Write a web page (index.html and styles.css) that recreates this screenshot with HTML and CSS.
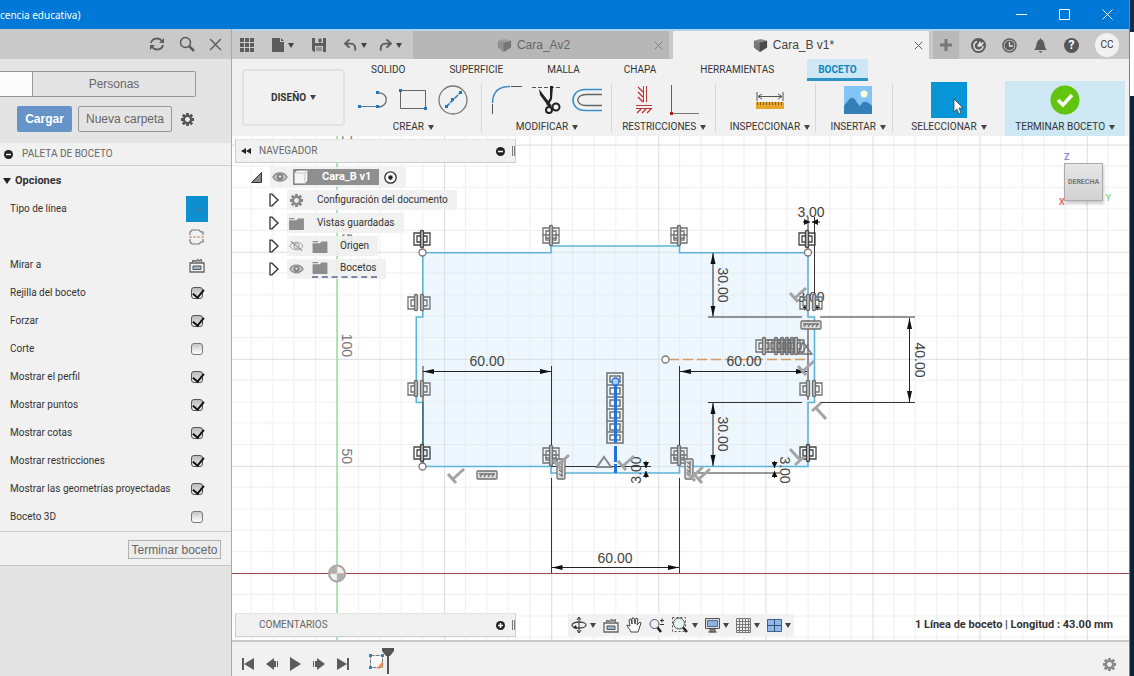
FILE: index.html
```html
<!DOCTYPE html>
<html lang="es">
<head>
    <meta charset="UTF-8">
    <meta name="viewport" content="width=device-width, initial-scale=1.0">
    <title>Cara_B v1*</title>
    <link rel="stylesheet" href="styles.css">
</head>
<body>

    <!-- shared icons -->
    <svg class="sprite" aria-hidden="true">
        <symbol id="i-gear" viewBox="0 0 16 16">
            <path d="M8 1v14M1 8h14M3 3l10 10M13 3L3 13" stroke="currentColor" stroke-width="3"/>
            <circle cx="8" cy="8" r="5" fill="currentColor"/>
            <circle cx="8" cy="8" r="2.6" fill="#eee"/>
        </symbol>
        <symbol id="i-eye" viewBox="0 0 16 12">
            <path d="M1 6C4 0.6 12 0.6 15 6C12 11.4 4 11.4 1 6Z" fill="#c4c4c4" stroke="#8a8a8a" stroke-width="1.4"/>
            <circle cx="8" cy="6" r="3.2" fill="#808080"/>
            <circle cx="8" cy="5.6" r="1.2" fill="#eee"/>
        </symbol>
        <symbol id="i-eye-off" viewBox="0 0 16 12">
            <path d="M1 6C4 0.6 12 0.6 15 6C12 11.4 4 11.4 1 6Z" fill="none" stroke="#9a9a9a"/>
            <circle cx="8" cy="6" r="2.8" fill="none" stroke="#9a9a9a"/>
            <path d="M2 1l12 10" stroke="#888" stroke-width="1.2"/>
        </symbol>
        <symbol id="i-folder" viewBox="0 0 16 14">
            <path d="M0 1h6v1.500H0zM0 3.500h8L9.500 1.500H16V14H0z" fill="#8d8d8d"/>
        </symbol>
        <symbol id="i-arrow" viewBox="0 0 10 14">
            <path d="M1 1.200h2L9 7L3 12.800H1z" fill="#fff" stroke="#333" stroke-width="1.300"/>
        </symbol>
        <symbol id="i-part" viewBox="0 0 16 16">
            <path d="M1 3L8 1L15 3V10L8 15L1 10z" fill="#8b8b8b"/>
            <path d="M1 3L7 5V15L1 10z" fill="#777"/>
            <path d="M7 5L15 3V10L7 15z" fill="#4c4c4c"/>
        </symbol>
        <symbol id="i-close" viewBox="0 0 12 12">
            <path d="M1 1l10 10M11 1L1 11" stroke="currentColor" stroke-width="1.300"/>
        </symbol>
        <symbol id="i-lookat" viewBox="0 0 16 16">
            <path d="M1 6h14v9H1z" fill="#f4f4f4" stroke="#666" stroke-width="1.300"/>
            <path d="M4 9h8v3.500H4z" fill="#9db6cc" stroke="#555"/>
            <path d="M3 6L4 3l2 1.500L9 2v1.500h2L12 2l1 4M3 4h9" fill="none" stroke="#666"/>
        </symbol>
        <symbol id="i-undo" viewBox="0 0 14 14">
            <path d="M6 1L1 5.500L6 10M1.500 5.500H7C11 5.500 12.500 8 12 13" fill="none" stroke="currentColor" stroke-width="2"/>
        </symbol>
    </svg>

    <div class="desktop">
        <div class="window">

            <header class="titlebar">
                <span class="title">cencia educativa)</span>
                <button aria-label="Minimizar"><svg width="11" height="11"><path d="M0 5.500h11" stroke="#fff"/></svg></button>
                <button aria-label="Maximizar"><svg width="11" height="11"><path d="M0.500 0.500h10v10H0.500z" stroke="#fff" fill="none"/></svg></button>
                <button aria-label="Cerrar"><svg width="11" height="11"><path d="M0.500 0.500l10 10M10.500 0.500l-10 10" stroke="#fff"/></svg></button>
            </header>

            <div class="app">

                <!-- left panel -->
                <aside class="side">
                    <div class="side-bar">
                        <button class="icon" aria-label="Actualizar"><svg width="16" height="16" viewBox="0 0 16 16"><path d="M2 7C3 2 10 1 13 5M14 9C13 14 6 15 3 11" fill="none" stroke="currentColor" stroke-width="1.800"/><path d="M15 2v5h-5zM1 14V9h5z" fill="currentColor"/></svg></button>
                        <button class="icon" aria-label="Buscar"><svg width="16" height="16" viewBox="0 0 16 16"><circle cx="6.500" cy="6.500" r="5" fill="none" stroke="currentColor" stroke-width="1.500"/><path d="M10 10l5 5" stroke="currentColor" stroke-width="2.500"/></svg></button>
                        <button class="icon" aria-label="Cerrar panel"><svg width="13" height="13"><use href="#i-close"/></svg></button>
                    </div>

                    <div class="segment">
                        <button class="on" aria-label="Todo"></button>
                        <button class="people">Personas</button>
                    </div>
                    <div class="upload">
                        <button class="load">Cargar</button>
                        <button class="new">Nueva carpeta</button>
                        <button class="icon" aria-label="Ajustes"><svg width="15" height="15"><use href="#i-gear"/></svg></button>
                    </div>

                    <section class="palette">
                        <h2><svg width="9" height="9"><circle cx="4.500" cy="4.500" r="4.500" fill="#222"/><path d="M2 4.500h5" stroke="#fff" stroke-width="1.500"/></svg>PALETA DE BOCETO</h2>
                        <h3><svg width="8" height="6"><path d="M0 0h8L4 6z" fill="#222"/></svg>Opciones</h3>
                        <div class="opt"><span>Tipo de línea</span>
                            <button class="line-type" aria-label="Construcción"><svg width="16" height="14" viewBox="0 0 16 14"><path d="M0 7h16M7 3l5 4-5 4" fill="none" stroke="#3f7f9a" stroke-dasharray="3 1"/></svg></button>
                        </div>
                        <div class="opt"><span></span>
                            <button class="icon" aria-label="Línea de centro"><svg width="16" height="16" viewBox="0 0 16 16"><path d="M1 6V3L3 1H10L12 3H14V6M1 10V13L3 15H10L12 13H14V10" fill="none" stroke="#777" stroke-width="1.200"/><path d="M0 8h16" stroke="#e08040" stroke-dasharray="3 1"/></svg></button>
                        </div>
                        <div class="opt"><span>Mirar a</span>
                            <button class="icon" aria-label="Mirar a"><svg width="16" height="16"><use href="#i-lookat"/></svg></button>
                        </div>
                        <div class="opt"><label for="o1">Rejilla del boceto</label><input type="checkbox" id="o1" checked></div>
                        <div class="opt"><label for="o2">Forzar</label><input type="checkbox" id="o2" checked></div>
                        <div class="opt"><label for="o3">Corte</label><input type="checkbox" id="o3"></div>
                        <div class="opt"><label for="o4">Mostrar el perfil</label><input type="checkbox" id="o4" checked></div>
                        <div class="opt"><label for="o5">Mostrar puntos</label><input type="checkbox" id="o5" checked></div>
                        <div class="opt"><label for="o6">Mostrar cotas</label><input type="checkbox" id="o6" checked></div>
                        <div class="opt"><label for="o7">Mostrar restricciones</label><input type="checkbox" id="o7" checked></div>
                        <div class="opt"><label for="o8">Mostrar las geometrías proyectadas</label><input type="checkbox" id="o8" checked></div>
                        <div class="opt"><label for="o9">Boceto 3D</label><input type="checkbox" id="o9"></div>
                        <div class="palette-foot"><button>Terminar boceto</button></div>
                    </section>
                </aside>

                <main class="main">

                    <!-- quick access + document tabs -->
                    <div class="tabbar">
                        <div class="quick">
                            <button class="icon" aria-label="Panel de datos"><svg width="14" height="14"><path d="M0 2h14M0 7h14M0 12h14" stroke="currentColor" stroke-width="4" stroke-dasharray="4 1"/></svg></button>
                            <button class="icon drop" aria-label="Archivo"><svg width="12" height="14"><path d="M0 0h8v4h4v10H0zM9 0l3 3H9z" fill="currentColor"/></svg></button>
                            <button class="icon" aria-label="Guardar"><svg width="14" height="14"><path d="M0 0h14v14H2l-2-2z" fill="currentColor"/><path d="M3 0h8v5H3zM3 8h8v6H3z" fill="#c9c9c9"/><path d="M7 1h2v3H7zM4 10h6M4 12h6" fill="currentColor" stroke="currentColor"/></svg></button>
                            <button class="icon drop" aria-label="Deshacer"><svg width="13" height="14"><use href="#i-undo"/></svg></button>
                            <button class="icon drop" aria-label="Rehacer"><svg class="flip" width="13" height="14"><use href="#i-undo"/></svg></button>
                        </div>
                        <div class="doc">
                            <a href="#"><svg width="15" height="15"><use href="#i-part"/></svg>Cara_Av2</a>
                            <button class="icon" aria-label="Cerrar Cara_A"><svg width="9" height="9"><use href="#i-close"/></svg></button>
                        </div>
                        <div class="doc active">
                            <a href="#"><svg width="15" height="15"><use href="#i-part"/></svg>Cara_B v1*</a>
                            <button class="icon" aria-label="Cerrar Cara_B"><svg width="9" height="9"><use href="#i-close"/></svg></button>
                        </div>
                        <button class="plus" aria-label="Nuevo"><svg width="12" height="12"><path d="M6 0v12M0 6h12" stroke="#777" stroke-width="3"/></svg></button>
                        <div class="account">
                            <button class="icon" aria-label="Extensiones"><svg width="15" height="15"><circle cx="7.500" cy="7.500" r="7.500" fill="currentColor"/><path d="M6 3.500A4.500 4.500 0 1 0 12 8" fill="none" stroke="#ddd" stroke-width="1.500"/><path d="M6 8l3-5 1 2 3-1-2 4-3 1z" fill="#ddd"/></svg></button>
                            <button class="icon" aria-label="Trabajos"><svg width="15" height="15"><circle cx="7.500" cy="7.500" r="6.500" fill="#ddd" stroke="currentColor" stroke-width="1.500"/><circle cx="7.500" cy="7.500" r="5" fill="currentColor"/><path d="M7.500 4v4h3.500" fill="none" stroke="#ddd" stroke-width="1.300"/></svg></button>
                            <button class="icon" aria-label="Notificaciones"><svg width="15" height="15"><path d="M7.500 0l1 1.500C12 3 11 8 13 11l1 1H1l1-1C4 8 3 3 6.500 1.500zM5.500 13h4l-2 2z" fill="currentColor"/></svg></button>
                            <button class="help">?</button>
                            <button class="avatar">CC</button>
                        </div>
                    </div>

                    <!-- ribbon -->
                    <div class="ribbon">
                        <button class="workspace drop">DISEÑO</button>
                        <div class="ribbon-body">
                            <nav class="ribbon-tabs">
                                <a href="#">SOLIDO</a>
                                <a href="#">SUPERFICIE</a>
                                <a href="#">MALLA</a>
                                <a href="#">CHAPA</a>
                                <a href="#">HERRAMIENTAS</a>
                                <a href="#" class="active">BOCETO</a>
                            </nav>
                            <div class="groups">
                                <div class="group">
                                    <div class="tools">
                                        <svg width="30" height="30"><path d="M20 22C31 22 31 7 20 8" fill="none" stroke="#6f6f6f" stroke-width="1.300"/><path d="M1 21.500h19" stroke="#557f9f"/><path d="M0 20h3v3H0zM18 20h3v3h-3zM18 6h3v3h-3z" fill="#1f78b8"/></svg>
                                        <svg width="30" height="30"><path d="M2.500 5.500h25v18h-25z" fill="none" stroke="#666"/><path d="M1 4h3v3H1zM26 22h3v3h-3z" fill="#1f78b8"/></svg>
                                        <svg width="30" height="30"><circle cx="15" cy="15" r="14" fill="none" stroke="#777" stroke-width="1.300"/><path d="M8 22L22 8" stroke="#1f78b8" stroke-width="1.500" stroke-dasharray="5 1"/><path d="M7 20h3v3H7zM13 13h3v3h-3zM21 6h3v3h-3z" fill="#1f78b8"/></svg>
                                    </div>
                                    <button class="drop">CREAR</button>
                                </div>
                                <div class="group">
                                    <div class="tools">
                                        <svg width="31" height="30"><path d="M1.500 29V19M20 1.500H31" stroke="#555"/><path d="M1.500 18C1.500 7 8 1.500 19 1.500" fill="none" stroke="#3a8fcb" stroke-width="1.500"/></svg>
                                        <svg width="30" height="30"><path d="M0 2.500h30" stroke="#555" stroke-dasharray="4 2"/><path d="M7 4L20 21L17 22L8 10zM18 1h3l-1 13-4 7-2-2 4-6z" fill="#222"/><circle cx="17" cy="25" r="3" fill="none" stroke="#222" stroke-width="2"/><circle cx="24" cy="22" r="3.500" fill="none" stroke="#222" stroke-width="2"/></svg>
                                        <svg width="30" height="30"><path d="M30 4.500H13C-3 4.500-3 25.500 13 25.500H30" fill="none" stroke="#3a8fcb" stroke-width="1.600"/><path d="M30 9.500H14C3 9.500 3 20.500 14 20.500H30" fill="none" stroke="#666" stroke-width="1.400"/></svg>
                                    </div>
                                    <button class="drop">MODIFICAR</button>
                                </div>
                                <div class="group">
                                    <div class="tools">
                                        <svg width="30" height="30"><path d="M14.500 1v16M17.500 1v16M7 20.500h16M7 23.500h16" stroke="#b73a3a" fill="none"/><path d="M14 7L9 2M14 12L9 7M14 17L9 12M8 28l4-4M13 28l4-4M18 28l4-4" stroke="#c22" stroke-width="1.200"/></svg>
                                        <svg width="30" height="30"><path d="M2.500 0v28" stroke="#c03a3a"/><path d="M2 28.500h28" stroke="#777"/><path d="M1 27h3v3H1z" fill="#a22"/></svg>
                                    </div>
                                    <button class="drop">RESTRICCIONES</button>
                                </div>
                                <div class="group shift">
                                    <div class="tools">
                                        <svg width="28" height="30"><path d="M1 7v9M27 7v9M2 11.500h24M6 9l-4 2.500L6 14M22 9l4 2.500L22 14" stroke="#555" fill="none"/><path d="M0 17h28v7H0z" fill="#e8a62b"/><path d="M1 18.500h26" stroke="#7b5a1a" stroke-width="3" stroke-dasharray="1 2"/></svg>
                                    </div>
                                    <button class="drop">INSPECCIONAR</button>
                                </div>
                                <div class="group shift">
                                    <div class="tools">
                                        <svg width="28" height="28"><path d="M0 0h28v28H0z" fill="#82c4f5"/><path d="M0 20C4 15 6 11 9 12C12 13 13 18 16 20C19 15 22 14 28 20V28H0z" fill="#357fb8"/><circle cx="20" cy="8" r="3.500" fill="#fffce0"/></svg>
                                    </div>
                                    <button class="drop">INSERTAR</button>
                                </div>
                                <div class="group">
                                    <div class="tools">
                                        <svg width="36" height="36"><path d="M0 0h36v36H0z" fill="#0696d7"/><path d="M23 17V30L26 27L28 32L30 31L28 26H32z" fill="#fff" stroke="#333" stroke-width="0.700"/></svg>
                                    </div>
                                    <button class="drop">SELECCIONAR</button>
                                </div>
                                <div class="group finish">
                                    <div class="tools">
                                        <svg width="30" height="30"><circle cx="15" cy="15" r="14.500" fill="#62c40c"/><path d="M8 15l5 5L22 10" fill="none" stroke="#fff" stroke-width="3.500"/></svg>
                                    </div>
                                    <button class="drop">TERMINAR BOCETO</button>
                                </div>
                            </div>
                        </div>
                    </div>

                    <!-- sketch canvas -->
                    <div class="canvas">
                        <svg class="sketch" aria-label="Boceto">
                            <defs>
                                <pattern id="grid" x="337" y="573" width="107.100" height="107.100" patternUnits="userSpaceOnUse">
                                    <path d="M21.400 0v108M42.800 0v108M64.300 0v108M85.700 0v108M0 21.400h108M0 42.800h108M0 64.300h108M0 85.700h108" stroke="#888" stroke-opacity="0.140"/>
                                    <path d="M0.500 0v108M0 0.500h108" stroke="#777" stroke-opacity="0.260"/>
                                </pattern>
                                <marker id="tip" viewBox="0 0 11 6" refX="11" refY="3" markerWidth="11" markerHeight="6" markerUnits="userSpaceOnUse" orient="auto-start-reverse"><path d="M0 0.500L11 3L0 5.500z" fill="#111"/></marker>
                                <marker id="tip-s" viewBox="0 0 6 6" refX="6" refY="3" markerWidth="6" markerHeight="6" markerUnits="userSpaceOnUse" orient="auto"><path d="M0 0L6 3L0 6z" fill="#111"/></marker>
                                <g id="coin" fill="none">
                                    <path d="M-2-6H-8V6H-2M2-6H8V6H2M-2-3H-5V3H-2M2-3H5V3H2"/>
                                    <rect x="-1.500" y="-8.500" width="3" height="17" rx="1" fill="#bbb"/>
                                </g>
                                <g id="coin2" fill="none">
                                    <path d="M-2-8H-8V7H-2M2-8H8V7H2M-2-5H-5V4H-2M2-5H5V4H2M-8-1H8M-6 2H6"/>
                                    <rect x="-1.500" y="-10.500" width="3" height="20" rx="1" fill="#bbb"/>
                                </g>
                                <g id="coinw" fill="none">
                                    <path d="M-5-6H-11V6H-5M2-6H11V6H2M-5-3H-8V3H-5M2-3H8V3H2M-2-5V6"/>
                                    <rect x="-4.500" y="-8.500" width="3" height="16" rx="1" fill="#bbb"/>
                                    <rect x="1.500" y="-8.500" width="3" height="16" rx="1" fill="#bbb"/>
                                </g>
                                <g id="perp"><path d="M-4 3L7-7M-9-2L-1 7" fill="none" stroke="#a4a4a4" stroke-width="3"/></g>
                                <g id="horiz"><rect x="-10" y="-4" width="20" height="8" rx="1" fill="#ddd"/><path d="M-8-1H8M-7 2l2-3M-3 2l2-3M1 2l2-3M5 2l2-3"/></g>
                            </defs>
                            <g transform="translate(-232 -136)">
                                <rect x="232" y="136" width="100%" height="100%" fill="url(#grid)"/>
                                <path class="profile" d="M422.800 252.700H551V246H679.500V252.700H808V317H814.500V402.500H808V466.500H679.500V473H551V466.500H422.800V402.500H416.300V317H422.800Z"/>
                                <path d="M232 573.500H2000" stroke="#a04848"/>
                                <path d="M337 136V2000" stroke="#9bdca4" stroke-width="1.500"/>
                                <circle cx="337" cy="573.500" r="8" fill="#eee" fill-opacity="0.800" stroke="#a9a2a2" stroke-width="2"/>
                                <path d="M337 573.500V566A7.500 7.500 0 0 0 329.500 573.500ZM337 573.500V581A7.500 7.500 0 0 0 344.500 573.500Z" fill="#b5aeae"/>
                                <g class="ruler">
                                    <text transform="translate(342 464) rotate(90)">50</text>
                                    <text transform="translate(342 357) rotate(90)">100</text>
                                    <text transform="translate(342 249) rotate(90)">150</text>
                                    <text transform="translate(342 141) rotate(90)">200</text>
                                </g>

                                <!-- extension lines -->
                                <path class="ext" d="M423 366V466M551.500 366V466M551.500 478V573M679.500 366V466M679.500 478V573M708 317H802M820 317H915M708 402.500H802M820 402.500H915M808 217V250M814.500 217V310M808 320V400M551 466.500H651M694 473H780"/>
                                <!-- dimensions -->
                                <g class="dim">
                                    <path d="M423 371.500H551"/>
                                    <path d="M680 371.500H807"/>
                                    <path d="M551.500 567.500H679"/>
                                    <path d="M713 253V316.500"/>
                                    <path d="M713 403V466"/>
                                    <path d="M909.500 318V402"/>
                                </g>
                                <g class="dim-s">
                                    <path d="M803 222H810"/><path d="M820 222H812"/>
                                    <path d="M803 307.500H810"/><path d="M820 307.500H812"/>
                                    <path d="M646 461V468"/><path d="M646 478V471"/>
                                    <path d="M774.500 461V468"/><path d="M774.500 478V471"/>
                                </g>
                                <path d="M669 359.500H808" stroke="#d99a62" stroke-width="1.300" stroke-dasharray="10 4"/>
                                <g class="values">
                                    <text x="487" y="366">60.00</text>
                                    <text x="744" y="366">60.00</text>
                                    <text x="615" y="563">60.00</text>
                                    <text x="811" y="217">3.00</text>
                                    <text x="811" y="302">3.00</text>
                                    <text transform="translate(718 285) rotate(90)">30.00</text>
                                    <text transform="translate(718 434) rotate(90)">30.00</text>
                                    <text transform="translate(915 360) rotate(90)">40.00</text>
                                    <text transform="translate(780 470) rotate(90)">3.00</text>
                                    <text transform="translate(641 470) rotate(-90)">3.00</text>
                                </g>

                                <!-- constraints -->
                                <g stroke="#444" stroke-width="1.300">
                                    <use href="#coin" x="422" y="239"/><use href="#coin" x="422" y="453"/>
                                    <use href="#coin" x="807" y="239"/><use href="#coin" x="808" y="453"/>
                                </g>
                                <g stroke="#707070" stroke-width="1.300">
                                    <use href="#coin2" x="551" y="236"/><use href="#coin2" x="679" y="236"/>
                                    <use href="#coin2" x="551" y="456"/><use href="#coin2" x="679" y="456"/>
                                    <use href="#coinw" x="419" y="303"/><use href="#coinw" x="419" y="389"/>
                                    <use href="#coinw" x="811" y="303"/><use href="#coinw" x="811" y="389"/>
                                    <use href="#coin" x="764" y="346"/><use href="#coin" x="776" y="346"/><use href="#coin" x="782" y="346"/>
                                    <use href="#coin" x="787" y="346"/><use href="#coin" x="792" y="346"/><use href="#coin" x="796" y="346"/>
                                    <path d="M798 354H812L803 342ZM802 353L808 344" fill="none"/>
                                    <use href="#horiz" x="487" y="475"/><use href="#horiz" x="811" y="325"/>
                                    <use href="#horiz" transform="translate(561 469) rotate(90)"/>
                                    <use href="#horiz" transform="translate(689 469) rotate(90)"/>
                                    <path d="M607 373H623V443H607ZM610 376H620V382H610ZM610 388H620V394H610ZM610 400H620V406H610ZM610 412H620V418H610ZM610 424H620V430H610ZM610 435H620V440H610ZM607 385H623M607 397H623M607 409H623M607 421H623M607 432H623" fill="none" stroke-width="1.500"/>
                                </g>
                                <g>
                                    <use href="#perp" x="457" y="476"/><use href="#perp" x="627" y="463"/>
                                    <use href="#perp" x="799" y="295"/><use href="#perp" x="562" y="462"/>
                                    <use href="#perp" x="703" y="476"/><use href="#perp" x="696" y="474"/>
                                    <use href="#perp" x="807" y="368"/>
                                    <use href="#perp" transform="translate(819 412) rotate(90)"/>
                                    <use href="#perp" transform="translate(797 456) rotate(-90)"/>
                                </g>
                                <path d="M604 457L611 467H597Z" fill="none" stroke="#888" stroke-width="2"/>

                                <path d="M615.500 381V443" stroke="#2673d8" stroke-width="3"/>
                                <path d="M615.500 446V473" stroke="#2673d8" stroke-width="3" stroke-dasharray="16 2"/>
                                <g fill="#fff" stroke="#777" stroke-width="1.300">
                                    <circle cx="422.500" cy="252.500" r="3.500"/><circle cx="808" cy="252.500" r="3.500"/>
                                    <circle cx="422.500" cy="466.500" r="3.500"/><circle cx="665.500" cy="359.500" r="3.500"/>
                                    <circle cx="615.500" cy="381.500" r="3.500" fill="#a8ccf4" stroke="#2673d8"/>
                                </g>
                            </g>
                        </svg>

                        <section class="browser">
                            <h2 class="panel-head">
                                <svg width="10" height="6"><path d="M5 0v6L0 3zM10 0v6L5 3z" fill="#222"/></svg>
                                <span>NAVEGADOR</span>
                                <svg width="9" height="9"><circle cx="4.500" cy="4.500" r="4.500" fill="#222"/><path d="M2 4.500h5" stroke="#fff" stroke-width="1.500"/></svg>
                                <i class="grip"></i>
                            </h2>
                            <ul class="tree">
                                <li class="root">
                                    <svg width="11" height="11"><path d="M10.500 0.500v10H0.500z" fill="#888" stroke="#333"/></svg>
                                    <div class="node">
                                        <svg width="16" height="12"><use href="#i-eye"/></svg>
                                        <b><svg width="16" height="16" viewBox="0 0 16 16"><path d="M1 4L4 1H15V12L12 15H1z" fill="#f5f5f5" stroke="#777"/><path d="M1 4h11v11M12 4l3-3" fill="none" stroke="#c5c5c5"/></svg>Cara_B v1</b>
                                        <svg width="13" height="13"><circle cx="6.500" cy="6.500" r="5.700" fill="#fff" stroke="#333" stroke-width="1.300"/><circle cx="6.500" cy="6.500" r="2.200" fill="#222"/></svg>
                                    </div>
                                </li>
                                <li><svg width="10" height="14"><use href="#i-arrow"/></svg><div class="node wide"><svg class="grey" width="15" height="15"><use href="#i-gear"/></svg>Configuración del documento</div></li>
                                <li><svg width="10" height="14"><use href="#i-arrow"/></svg><div class="node wide"><svg width="15" height="13"><use href="#i-folder"/></svg>Vistas guardadas</div></li>
                                <li><svg width="10" height="14"><use href="#i-arrow"/></svg><div class="node"><svg width="15" height="12"><use href="#i-eye-off"/></svg><svg width="16" height="13"><use href="#i-folder"/></svg><span>Origen</span></div></li>
                                <li><svg width="10" height="14"><use href="#i-arrow"/></svg><div class="node"><svg width="15" height="12"><use href="#i-eye"/></svg><div class="hatched"><svg width="16" height="13"><use href="#i-folder"/></svg><span>Bocetos</span></div></div></li>
                            </ul>
                        </section>

                        <div class="viewcube">
                            <span class="z">Z</span>
                            <button>DERECHA</button>
                            <span class="x">X</span>
                            <span class="y">Y</span>
                        </div>

                        <section class="comments panel-head">
                            <span>COMENTARIOS</span>
                            <svg width="9" height="9"><circle cx="4.500" cy="4.500" r="4.500" fill="#222"/><path d="M2 4.500h5M4.500 2v5" stroke="#fff" stroke-width="1.500"/></svg>
                            <i class="grip"></i>
                        </section>

                        <div class="viewbar">
                            <button class="icon drop" aria-label="Órbita"><svg width="16" height="16"><path d="M8 0v16M6 3l2-3 2 3M6 13l2 3 2-3" stroke="#333" fill="none"/><ellipse cx="8" cy="8" rx="7" ry="3" fill="none" stroke="#444" stroke-width="1.300"/><path d="M5 8l-3 3 4 1z" fill="#222"/></svg></button>
                            <button class="icon" aria-label="Mirar a"><svg width="16" height="16"><use href="#i-lookat"/></svg></button>
                            <button class="icon" aria-label="Encuadre"><svg width="16" height="16"><path d="M5 15C4 12 1 10 1 8L4 9L3 3L5 2L6 7V1H8L9 7L10 1L12 2L11 8L14 5L15 6L12 15Z" fill="#fff" stroke="#444"/></svg></button>
                            <button class="icon" aria-label="Zoom"><svg width="16" height="16"><circle cx="5.500" cy="7" r="4.500" fill="#eef" stroke="#555"/><path d="M8.500 10.500L12 15" stroke="#222" stroke-width="2.500"/><path d="M11 3.500h4M13 1.500v4M11 7.500h4" stroke="#333"/></svg></button>
                            <button class="icon drop" aria-label="Ajustar"><svg width="17" height="16"><path d="M0.500 0.500h13v14h-13z" fill="none" stroke="#555" stroke-dasharray="2 2"/><circle cx="7" cy="6.500" r="5.500" fill="#e4f2f2" stroke="#555"/><path d="M11 10.500l4 4.500" stroke="#222" stroke-width="2.500"/></svg></button>
                            <button class="icon drop" aria-label="Visualización"><svg width="15" height="15"><path d="M0.500 0.500h14v10h-14z" fill="#ddd" stroke="#555"/><path d="M2.500 2.500h10v6h-10z" fill="#8db4e0" stroke="#4d6f99"/><path d="M5 11h5v3H5zM3 14h9" fill="#888" stroke="#555"/></svg></button>
                            <button class="icon drop" aria-label="Rejilla"><svg width="15" height="15"><path d="M0.500 0.500h14v14h-14zM3.500 0v15M6.500 0v15M9.500 0v15M12.500 0v15M0 3.500h15M0 6.500h15M0 9.500h15M0 12.500h15" fill="#eee" stroke="#777"/></svg></button>
                            <button class="icon drop" aria-label="Ventanas"><svg width="15" height="13"><path d="M0.500 0.500h14v12h-14z" fill="#8db8ea" stroke="#44628a"/><path d="M7.500 0v13M0 6.500h15" stroke="#33507a"/></svg></button>
                        </div>
                        <p class="status">1 Línea de boceto | Longitud : 43.00 mm</p>
                    </div>

                    <footer class="timeline">
                        <button class="icon" aria-label="Inicio"><svg width="12" height="12"><path d="M0 0h2v12H0zM12 0v12L2 6z" fill="currentColor"/></svg></button>
                        <button class="icon" aria-label="Anterior"><svg width="12" height="12"><path d="M8 0v12L0 6zM8 3h2v6H8zM11 3h1v6h-1z" fill="currentColor"/></svg></button>
                        <button class="icon" aria-label="Reproducir"><svg width="11" height="14"><path d="M0 0l11 7-11 7z" fill="currentColor"/></svg></button>
                        <button class="icon" aria-label="Siguiente"><svg width="12" height="12"><path d="M4 0v12l8-6zM0 3h1v6H0zM2 3h2v6H2z" fill="currentColor"/></svg></button>
                        <button class="icon" aria-label="Final"><svg width="12" height="12"><path d="M10 0h2v12h-2zM0 0v12l10-6z" fill="currentColor"/></svg></button>
                        <button class="icon feature" aria-label="Boceto1"><svg width="26" height="26"><path d="M1.500 7.500h12v12h-12z" fill="#fafafa" stroke="#777" stroke-dasharray="4 1"/><path d="M0 6h3v3H0zM12 6h3v3h-3zM0 18h3v3H0z" fill="#2f88c4"/><path d="M8 20l5-6 2 2-5 5z" fill="#f0904a"/><path d="M13 0h12v3l-4 5h-1v18h-2V8h-1l-4-5z" fill="#555"/></svg></button>
                        <button class="icon settings" aria-label="Configuración"><svg width="15" height="15"><use href="#i-gear"/></svg></button>
                    </footer>
                </main>
            </div>
        </div>
    </div>

</body>
</html>
```
FILE: styles.css
```css
* {
    margin: 0;
    padding: 0;
    box-sizing: border-box;
}

body {
    font-family: Roboto, "Liberation Sans", sans-serif;
    font-size: 10px;
    line-height: 14px;
    color: #333;
    overflow: hidden;
}

button {
    font: inherit;
    color: inherit;
    background: none;
    border: none;
    cursor: pointer;
}

a {
    color: inherit;
    text-decoration: none;
}

svg {
    display: block;
    flex: none;
}

.sprite {
    position: absolute;
    width: 0;
    height: 0;
}

.desktop {
    height: 100vh;
    padding-right: 4px;
    background: linear-gradient(#1b2a44 32px, #fff 32px, #fff 96px, #0c2438 96px);
}

.window {
    height: 100%;
    display: flex;
    flex-direction: column;
    border-right: 1px solid #4a90c8;
}

/* title bar */
.titlebar {
    height: 29px;
    flex: none;
    display: flex;
    align-items: center;
    background: #0078d7;
    color: #fff;
}

.title {
    flex: 1;
    font-family: "Noto Sans", sans-serif;
    font-size: 10px;
}

.titlebar button {
    width: 43px;
    height: 29px;
    display: flex;
    align-items: center;
    justify-content: center;
}

.app {
    flex: 1;
    min-height: 0;
    display: flex;
}

.icon {
    display: flex;
    align-items: center;
    justify-content: center;
    color: #5c5c5c;
}

.drop::after {
    content: "";
    display: inline-block;
    margin-left: 4px;
    vertical-align: middle;
    border: 3px solid transparent;
    border-top: 5px solid #444;
    border-bottom: none;
}

/* left panel */
.side {
    width: 232px;
    flex: none;
    background: #e4e4e4;
    border-right: 1px solid #aaa;
}

.side-bar {
    height: 30px;
    display: flex;
    align-items: center;
    justify-content: flex-end;
    gap: 14px;
    padding-right: 9px;
    background: #c9c9c9;
}

.segment {
    display: flex;
    height: 26px;
    margin: 12px 35px 9px 0;
    border: 1px solid #999;
    border-left: none;
    border-radius: 0 2px 2px 0;
}

.segment .on {
    width: 33px;
    background: #fcfcfc;
    border-right: 1px solid #999;
}

.people {
    flex: 1;
}

.people, .upload button, .palette-foot button {
    font-family: "Liberation Sans", sans-serif;
    font-size: 12px;
    color: #666;
}

.upload {
    display: flex;
    gap: 6px;
    padding: 0 0 11px 17px;
}

.upload .load {
    width: 55px;
    height: 26px;
    border-radius: 2px;
    background: #6794c8;
    color: #fff;
    font-weight: bold;
}

.upload .new {
    width: 94px;
    border: 1px solid #999;
    border-radius: 2px;
}

.upload .icon {
    width: 18px;
    color: #555;
}

.palette {
    background: #f1f1f1;
    border-bottom: 1px solid #c5c5c5;
}

.palette h2, .palette h3 {
    display: flex;
    align-items: center;
    font-weight: normal;
}

.palette h2 {
    height: 23px;
    gap: 9px;
    padding-left: 4px;
    border-bottom: 1px solid #ccc;
    font-size: 10px;
    color: #666;
}

.palette h3 {
    height: 29px;
    gap: 4px;
    padding-left: 3px;
    font-size: 11px;
    font-weight: bold;
}

.opt {
    height: 28px;
    display: flex;
    align-items: center;
    justify-content: space-between;
    padding: 0 23px 0 10px;
}

.opt .icon, .opt .line-type {
    width: 22px;
    height: 26px;
    display: flex;
    align-items: center;
    justify-content: center;
}

.opt .line-type {
    background: #0e8fd0;
}

.opt input {
    appearance: none;
    width: 12px;
    height: 12px;
    margin-right: 5px;
    border: 1px solid #777;
    border-radius: 3px;
    background: linear-gradient(#c8c8c8, #fff);
    position: relative;
}

.opt input:checked {
    background: linear-gradient(#bbb, #e8e8e8);
    border-color: #555;
}

.opt input:checked::after {
    content: "";
    position: absolute;
    left: 3px;
    top: -1px;
    width: 5px;
    height: 9px;
    border: solid #111;
    border-width: 0 2px 2px 0;
    transform: rotate(40deg);
}

.palette-foot {
    display: flex;
    justify-content: flex-end;
    padding: 8px 10px 6px;
    border-top: 1px solid #ccc;
}

.palette-foot button {
    height: 19px;
    width: 93px;
    border: 1px solid #b0b0b0;
    background: #ececec;
}

/* document tabs */
.main {
    flex: 1;
    min-width: 0;
    display: flex;
    flex-direction: column;
    background: #f1f1f1;
}

.tabbar {
    height: 30px;
    display: flex;
    align-items: stretch;
    background: #c9c9c9;
    border-top: 2px solid #b5d3ea;
}

.quick {
    width: 181px;
    display: flex;
    align-items: center;
    gap: 18px;
    padding-left: 8px;
}

.quick .drop + .drop {
    margin-left: -6px;
}

.flip {
    transform: scaleX(-1);
}

.doc {
    flex: 1;
    display: flex;
    align-items: center;
    margin-right: 4px;
    padding-right: 6px;
    background: #b7b7b7;
    color: #666;
}

.doc a {
    flex: 1;
    display: flex;
    justify-content: center;
    align-items: center;
    gap: 5px;
    font-family: "Liberation Sans", sans-serif;
    font-size: 12px;
}

.doc:not(.active) svg {
    opacity: 0.6;
}

.doc.active {
    background: #f1f1f1;
    color: #444;
}

.plus {
    width: 26px;
    display: flex;
    align-items: center;
    justify-content: center;
    background: #b9b9b9;
}

.account {
    display: flex;
    align-items: center;
    gap: 16px;
    padding: 0 10px 0 12px;
}

.help {
    width: 15px;
    height: 15px;
    border-radius: 50%;
    background: #555;
    color: #fff;
    font-size: 12px;
    font-weight: bold;
}

.avatar {
    width: 24px;
    height: 24px;
    border-radius: 50%;
    background: #f1f1f1;
}

/* ribbon */
.ribbon {
    height: 77px;
    display: flex;
    padding-right: 4px;
}

.workspace {
    width: 103px;
    margin: 10px 0 10px 10px;
    border: 2px solid #e2e2e2;
    border-radius: 4px;
    font-weight: bold;
}

.ribbon-body {
    flex: 1;
}

.ribbon-tabs {
    display: flex;
    gap: 22px;
    padding-left: 15px;
}

.ribbon-tabs a {
    height: 22px;
    padding: 4px 11px 0;
}

.ribbon-tabs .active {
    background: #cde8f4;
    border-bottom: 3px solid #2b93c6;
    color: #0f86bf;
    font-weight: bold;
}

.groups {
    height: 55px;
    display: grid;
    grid-template-columns: 137fr 131fr 104fr 100fr 77fr 113fr 120fr;
}

.group {
    display: flex;
    flex-direction: column;
    align-items: center;
    justify-content: flex-end;
    position: relative;
}

.group.shift {
    padding-left: 8px;
}

.group:not(.finish)::after {
    content: "";
    position: absolute;
    right: 0;
    top: 3px;
    bottom: 4px;
    width: 1px;
    background: #d8d8d8;
}

.group:nth-child(6)::after {
    display: none;
}

.group button {
    height: 18px;
    white-space: nowrap;
}

.tools {
    height: 37px;
    display: flex;
    align-items: center;
    gap: 10px;
}

.finish {
    background: #cde8f2;
}

/* canvas */
.canvas {
    flex: 1;
    min-height: 0;
    position: relative;
    background: #fff;
    overflow: hidden;
}

.sketch {
    position: absolute;
    width: 100%;
    height: 100%;
}

.profile {
    fill: #cfe9fb;
    fill-opacity: 0.35;
    stroke: #5eb4d8;
    stroke-width: 1.6;
}

.ruler text {
    font-family: "Liberation Sans", sans-serif;
    font-size: 14px;
    fill: #777;
    text-anchor: end;
}

.ext {
    stroke: #333;
    fill: none;
}

.dim path {
    stroke: #222;
    fill: none;
    marker-start: url(#tip);
    marker-end: url(#tip);
}

.dim-s path {
    stroke: #222;
    marker-end: url(#tip-s);
}

.values text {
    font-family: "Liberation Sans", sans-serif;
    font-size: 14px;
    fill: #444;
    text-anchor: middle;
}

.panel-head {
    display: flex;
    align-items: center;
    width: 281px;
    height: 24px;
    padding: 0 0 0 5px;
    background: #f1f1f1;
    border: 1px solid #ccc;
    border-top-color: #e4e4e4;
    font-size: 10px;
    font-weight: normal;
    color: #666;
}

.panel-head span {
    flex: 1;
    margin-left: 8px;
}

.grip {
    width: 3px;
    height: 10px;
    margin-left: 7px;
    border: solid #777;
    border-width: 0 1px;
}

.browser {
    position: absolute;
    left: 3px;
    top: 3px;
}

.comments {
    position: absolute;
    left: 3px;
    bottom: 3px;
    padding-left: 15px;
}

.tree {
    list-style: none;
    display: flex;
    flex-direction: column;
    gap: 3px;
    padding: 4px 0 0 34px;
}

.tree li {
    display: flex;
    align-items: center;
    gap: 8px;
}

.tree .root {
    margin-left: -18px;
}

.node, .hatched {
    display: flex;
    align-items: center;
    gap: 8px;
}

.node {
    height: 20px;
    padding: 0 9px 0 2px;
    background: rgba(240, 240, 240, 0.9);
}

.node span {
    margin-left: 4px;
}

.node.wide {
    gap: 13px;
}

.root .node {
    gap: 5px;
}

.node b {
    display: flex;
    align-items: center;
    gap: 13px;
    height: 16px;
    padding-right: 8px;
    background: #8f8f8f;
    color: #fff;
    font-size: 11px;
}

.grey {
    color: #888;
}

.hatched {
    padding-bottom: 1px;
    border-bottom: 2px dashed #8088a8;
}

.viewcube {
    position: absolute;
    top: 27px;
    right: 26px;
    width: 39px;
    height: 38px;
    font-weight: bold;
    font-size: 9px;
    line-height: 10px;
}

.viewcube button {
    width: 100%;
    height: 100%;
    font-size: 7px;
    color: #777;
    background: linear-gradient(#e6e6e6, #d2d2d2);
    border: 1px solid #aaa;
    box-shadow: 1px 3px 3px rgba(0, 0, 0, 0.2);
}

.viewcube span {
    position: absolute;
}

.z {
    top: -11px;
    left: 0;
    color: #8d86d8;
}

.x {
    bottom: -6px;
    left: -5px;
    color: #e07070;
}

.y {
    bottom: -2px;
    right: -8px;
    color: #94dc94;
}

.viewbar {
    position: absolute;
    left: 50%;
    bottom: 4px;
    transform: translateX(-50%);
    height: 22px;
    display: flex;
    align-items: center;
    gap: 7px;
    padding: 0 3px;
    background: #f1f1f1;
}

.viewbar .drop::after {
    margin-left: 3px;
}

.status {
    position: absolute;
    right: 16px;
    bottom: 8px;
    font-size: 11px;
    font-weight: bold;
}

/* timeline */
.timeline {
    height: 36px;
    flex: none;
    display: flex;
    align-items: center;
    gap: 12px;
    padding: 10px 12px 0 10px;
    border-top: 2px solid #c9c9c9;
}

.timeline .feature {
    margin: -6px 0 0 8px;
}

.settings {
    margin-left: auto;
}

.timeline .settings {
    color: #888;
}
```
